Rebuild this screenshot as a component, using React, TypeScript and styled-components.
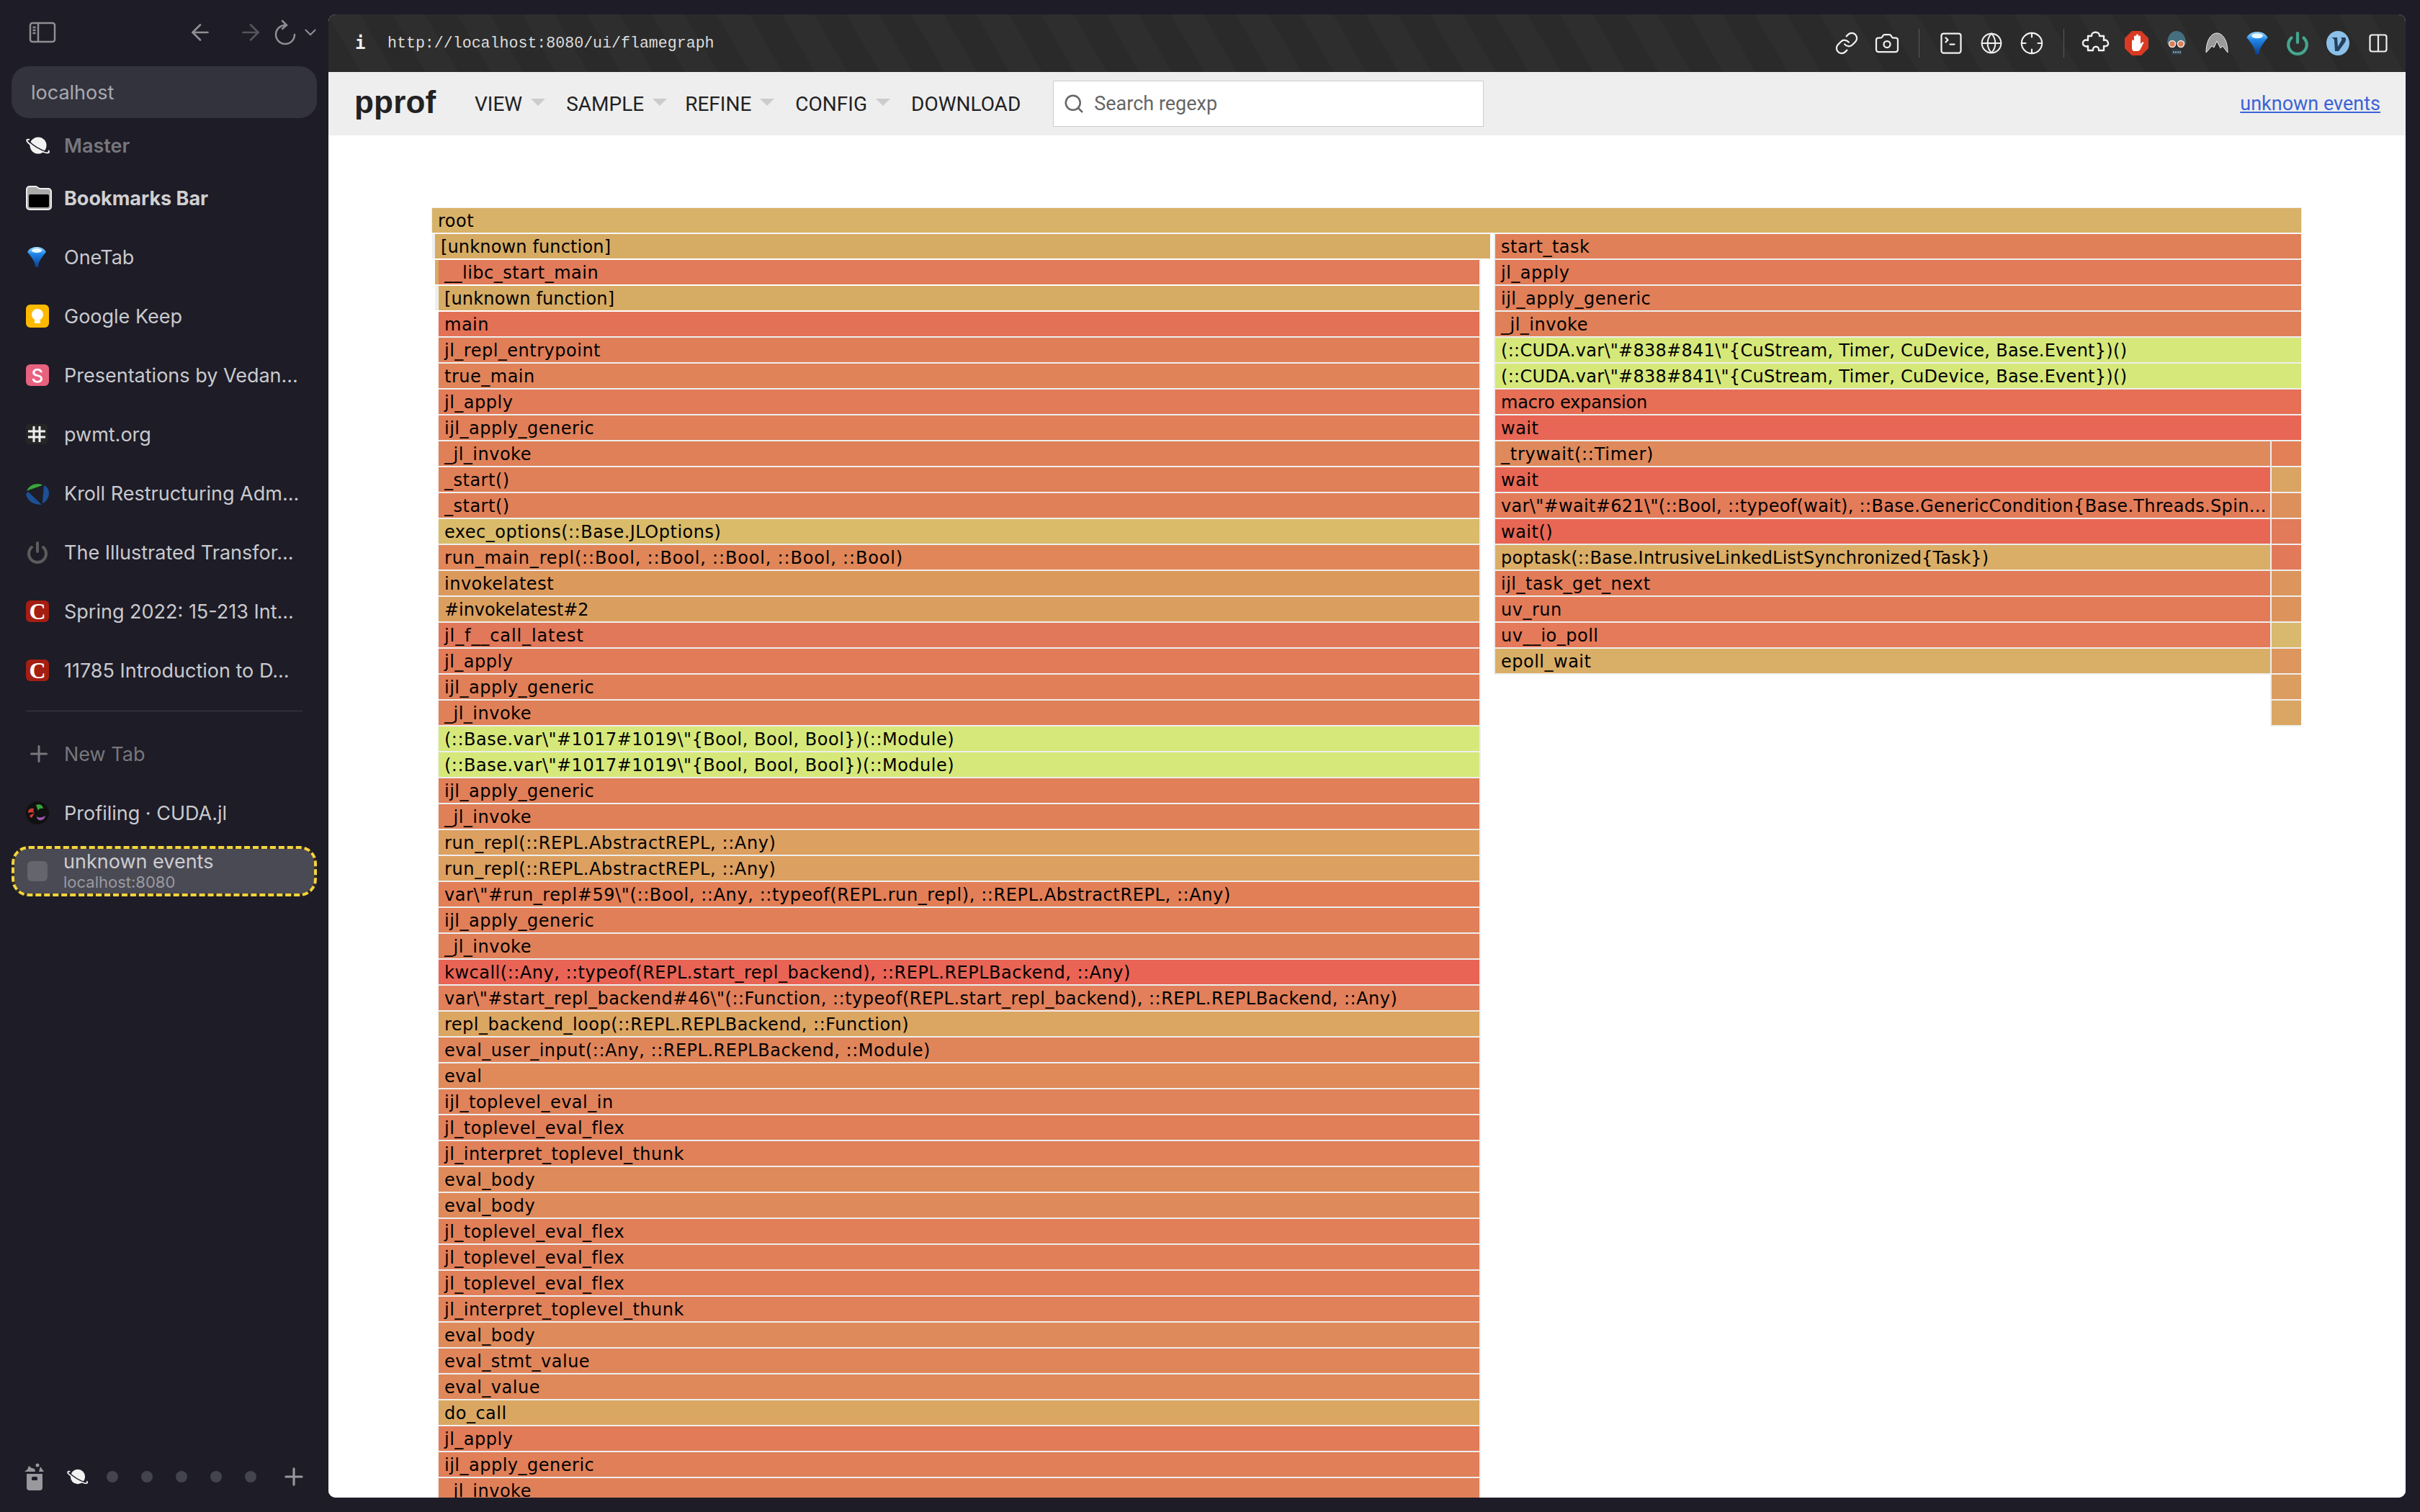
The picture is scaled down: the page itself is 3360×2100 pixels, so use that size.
import React from "react";
import styled, { createGlobalStyle } from "styled-components";
import { ArrowLeft, ArrowRight, Camera, ChevronDown, Crosshair, Globe, Link, Plus, Search, SquareTerminal } from "lucide-react";

const Page = createGlobalStyle`
  html, body {
    margin: 0;
    padding: 0;
    background: #1d1c27;
  }
  * {
    box-sizing: border-box;
  }
`;

const PlanetIcon = ({ size = 34 }: { size?: number }) => (
  <svg width={size} height={size} viewBox="0 0 34 34">
    <circle cx="17" cy="17" r="11.5" fill="#f2f2f2" />
    <path d="M5 9C1 8 0 10 3 13c5 5 17 12 25 14 4 1 5-1 3-3" fill="none" stroke="#f2f2f2" strokeWidth="2" />
    <path d="M4 11c6 6 16 12 25 15" fill="none" stroke="#1d1c27" strokeWidth="1.5" />
  </svg>
);

const FolderIcon = () => (
  <svg width="36" height="34" viewBox="0 0 36 34">
    <path d="M1 5a4 4 0 0 1 4-4h9l5 3h12a4 4 0 0 1 4 4v21a4 4 0 0 1-4 4H5a4 4 0 0 1-4-4z" fill="#aaa" stroke="#eee" strokeWidth="2" />
    <rect x="4" y="12" width="28" height="18" rx="2" fill="#000" />
  </svg>
);

const GemIcon = ({ size = 30 }: { size?: number }) => (
  <svg width={size} height={size} viewBox="0 0 30 30">
    <defs>
      <linearGradient id="gem" x1="0" y1="0" x2="0" y2="1">
        <stop offset="0" stopColor="#9fdcff" />
        <stop offset="0.35" stopColor="#1f86ea" />
        <stop offset="1" stopColor="#0b3d8a" />
      </linearGradient>
    </defs>
    <path d="M2 8c3-5 7-7 13-7s10 2 13 7c-4 5-8 10-10 15l-1 6h-4l-1-6C10 18 6 13 2 8z" fill="url(#gem)" />
    <ellipse cx="15" cy="6" rx="7" ry="3" fill="#e8f7ff" />
  </svg>
);

const KeepIcon = () => (
  <svg width="32" height="32" viewBox="0 0 32 32">
    <rect width="32" height="32" rx="6" fill="#fdb900" />
    <circle cx="16" cy="14" r="8" fill="#fff" />
    <rect x="12" y="22" width="8" height="4" fill="#fff" />
  </svg>
);

const HashIcon = () => (
  <svg width="30" height="28" viewBox="0 0 30 28">
    <rect width="30" height="28" rx="4" fill="#262626" />
    <path d="M11 3v22M19 3v22M3 10h24M3 18h24" stroke="#eee" strokeWidth="3" />
  </svg>
);

const KrollIcon = () => (
  <svg width="32" height="32" viewBox="0 0 32 32">
    <path d="M1 13C4 6 10 3 17 3c3 0 5 1 6 2L3 12z" fill="#3aa53a" />
    <path d="M0 17l3-3 19 18C10 32 2 27 0 17z" fill="#1c5096" />
    <path d="M25 5c5 2 7 7 7 11 0 6-4 12-8 14l-1-1z" fill="#1c5096" />
  </svg>
);

const PowerIcon = ({ size = 32, color = "#5c5c5c" }: { size?: number; color?: string }) => (
  <svg width={size} height={size} viewBox="0 0 32 32" fill="none" stroke={color} strokeWidth="4" strokeLinecap="round">
    <path d="M16 3v12" />
    <path d="M8 9a12 12 0 1 0 16 0" />
  </svg>
);

const JuliaIcon = () => (
  <svg width="32" height="32" viewBox="0 0 32 32">
    <circle cx="16" cy="16" r="16" fill="#111" />
    <path d="M14 5c6-2 9 0 10 5-4-1-6 0-7 3-1-3-2-5-3-8z" fill="#3aa53a" />
    <path d="M3 16c0-5 3-7 8-6-1 3-1 4 1 6-4-1-6-1-9 0zM5 20c2-2 4-3 7-3-2 2-3 4-4 6-2-1-3-2-3-3z" fill="#cb3c33" />
    <path d="M15 21c3 2 7 2 12-1-1 5-5 7-9 6-2-1-3-3-3-5z" fill="#9558b2" />
  </svg>
);

const PanelIcon = () => (
  <svg width="38" height="30" viewBox="0 0 38 30" fill="none" stroke="#8e8e93" strokeWidth="2.5">
    <rect x="2" y="2" width="34" height="26" rx="3" />
    <path d="M13 2v26" />
    <path d="M5.5 8h4M5.5 12h4M5.5 16h4" />
  </svg>
);

const ReloadIcon = () => (
  <svg width="32" height="36" viewBox="0 0 32 36" fill="none" stroke="#8e8e93" strokeWidth="2.5" strokeLinecap="round">
    <path d="M17 8A13 13 0 1 0 29 21" />
    <path d="M12 2l6 6-6 5" />
  </svg>
);

const TrashIcon = () => (
  <svg width="30" height="38" viewBox="0 0 30 38">
    <path d="M4 15h22v19a4 4 0 0 1-4 4H8a4 4 0 0 1-4-4z" fill="#98989d" />
    <rect x="11" y="19" width="8" height="5" rx="1.5" fill="#1d1c27" />
    <path d="M1 12l4-3 2-5 4 3 4 1 1 4zM21 12l2-7 5 7z" fill="#98989d" />
    <circle cx="19" cy="3" r="2.5" fill="#98989d" />
  </svg>
);

const PuzzleIcon = () => (
  <svg width="40" height="34" viewBox="0 0 40 34" fill="none" stroke="#f0f0f0" strokeWidth="2.4" strokeLinejoin="round">
    <path d="M9 7h5c-1-7 12-7 11 0h6v6c6-3 10 10 0 8v6h-7c1-7-9-7-8 0H9v-6C0 24-1 10 9 13z" />
  </svg>
);

const StopIcon = () => (
  <svg width="33" height="34" viewBox="0 0 33 34">
    <path d="M10 0h13l10 10v14L23 34H10L0 24V10z" fill="#d93a22" />
    <path d="M10 14c0-2 3-2 3 0V8c0-2 3-2 3 0V6c0-2 3-2 3 0v2c0-2 3-2 3 0v10l2-2c2-2 3 0 2 1l-4 8c-1 2-2 3-5 3h-3c-3 0-4-2-4-5z" fill="#fff" />
  </svg>
);

const GhostIcon = () => (
  <svg width="30" height="34" viewBox="0 0 30 34">
    <path d="M2 18C2 6 8 0 15 0s13 6 13 18z" fill="#456f7f" />
    <circle cx="9" cy="18" r="4.5" fill="#d97f5c" stroke="#f3e7dc" strokeWidth="1.6" />
    <circle cx="21" cy="18" r="4.5" fill="#d97f5c" stroke="#f3e7dc" strokeWidth="1.6" />
    <path d="M8 25h14v8H8z" fill="#2b3d46" />
    <path d="M11 28v3M14 28v3M17 28v3M20 28v3" stroke="#9fb4bd" strokeWidth="1.4" />
  </svg>
);

const PeakIcon = () => (
  <svg width="32" height="32" viewBox="0 0 32 32">
    <path d="M1 29C1 12 8 2 16 2s15 10 15 27l-7-9-3 3-5-10-4 9-3-2z" fill="#9b9b9b" stroke="#eee" strokeWidth="1" />
  </svg>
);

const VIcon = () => (
  <svg width="32" height="34" viewBox="0 0 32 34">
    <ellipse cx="16" cy="17" rx="16" ry="17" fill="#8bc0e8" />
    <path d="M7 9h8l1 13 5-9c1-2 0-3-1-4h6c2 2 1 5-1 8l-8 11h-5L11 13c0-2-2-3-4-4z" fill="#23405c" />
  </svg>
);

const SplitIcon = () => (
  <svg width="26" height="26" viewBox="0 0 26 26" fill="none" stroke="#f0f0f0" strokeWidth="2.2">
    <rect x="1.5" y="1.5" width="23" height="23" rx="3" />
    <path d="M13 1.5v23" />
  </svg>
);

// label, colour, and letter spacing where the row's width is off with the default
type Row = [string, string, number?];

const stackMain: Row[] = [
  ["main", "#e37155"],
  ["jl_repl_entrypoint", "#e07e58"],
  ["true_main", "#e08358"],
  ["jl_apply", "#e17b58"],
  ["ijl_apply_generic", "#e07f58"],
  ["_jl_invoke", "#e08058"],
  ["_start()", "#e08058"],
  ["_start()", "#e08058"],
  ["exec_options(::Base.JLOptions)", "#d9bb69"],
  ["run_main_repl(::Bool, ::Bool, ::Bool, ::Bool, ::Bool)", "#e08658", 0.82],
  ["invokelatest", "#dc995c"],
  ["#invokelatest#2", "#da9f5e", -0.07],
  ["jl_f__call_latest", "#e1785a", 0.9],
  ["jl_apply", "#e17b58"],
  ["ijl_apply_generic", "#e07f58"],
  ["_jl_invoke", "#e08058"],
  ['(::Base.var\\"#1017#1019\\"{Bool, Bool, Bool})(::Module)', "#d6e87a"],
  ['(::Base.var\\"#1017#1019\\"{Bool, Bool, Bool})(::Module)', "#d6e87a"],
  ["ijl_apply_generic", "#e07f58"],
  ["_jl_invoke", "#e08058"],
  ["run_repl(::REPL.AbstractREPL, ::Any)", "#dca060", 0.62],
  ["run_repl(::REPL.AbstractREPL, ::Any)", "#dca060", 0.62],
  ['var\\"#run_repl#59\\"(::Bool, ::Any, ::typeof(REPL.run_repl), ::REPL.AbstractREPL, ::Any)', "#e27f57", 0.6],
  ["ijl_apply_generic", "#e07f58"],
  ["_jl_invoke", "#e08058"],
  ["kwcall(::Any, ::typeof(REPL.start_repl_backend), ::REPL.REPLBackend, ::Any)", "#e96455"],
  ['var\\"#start_repl_backend#46\\"(::Function, ::typeof(REPL.start_repl_backend), ::REPL.REPLBackend, ::Any)', "#e1805a"],
  ["repl_backend_loop(::REPL.REPLBackend, ::Function)", "#dba662"],
  ["eval_user_input(::Any, ::REPL.REPLBackend, ::Module)", "#e0855a"],
  ["eval", "#e08a5a"],
  ["ijl_toplevel_eval_in", "#e0825a"],
  ["jl_toplevel_eval_flex", "#e07f58"],
  ["jl_interpret_toplevel_thunk", "#e0815a"],
  ["eval_body", "#df8a5a"],
  ["eval_body", "#df8a5a"],
  ["jl_toplevel_eval_flex", "#e07f58"],
  ["jl_toplevel_eval_flex", "#e07f58"],
  ["jl_toplevel_eval_flex", "#e07f58"],
  ["jl_interpret_toplevel_thunk", "#e0815a"],
  ["eval_body", "#df8a5a"],
  ["eval_stmt_value", "#e0855a"],
  ["eval_value", "#df885a"],
  ["do_call", "#daa762"],
  ["jl_apply", "#e17b58"],
  ["ijl_apply_generic", "#e07f58"],
  ["_jl_invoke", "#e08058"],
];

const stackTask: Row[] = [
  ["start_task", "#e08058"],
  ["jl_apply", "#e17b58"],
  ["ijl_apply_generic", "#e07f58"],
  ["_jl_invoke", "#e08058"],
  ['(::CUDA.var\\"#838#841\\"{CuStream, Timer, CuDevice, Base.Event})()', "#d6e87a", 0.28],
  ['(::CUDA.var\\"#838#841\\"{CuStream, Timer, CuDevice, Base.Event})()', "#d6e87a", 0.28],
  ["macro expansion", "#e66f55", -0.17],
  ["wait", "#e86655"],
];

const stackWait: Row[] = [
  ["_trywait(::Timer)", "#de8a5c", 0.75],
  ["wait", "#e86654"],
  ['var\\"#wait#621\\"(::Bool, ::typeof(wait), ::Base.GenericCondition{Base.Threads.Spin...', "#e37c58", 0.33],
  ["wait()", "#e76754"],
  ["poptask(::Base.IntrusiveLinkedListSynchronized{Task})", "#daae66", 0.22],
  ["ijl_task_get_next", "#e27b58"],
  ["uv_run", "#e37b58"],
  ["uv__io_poll", "#e47a59"],
  ["epoll_wait", "#d9ae66"],
];

const stackSide = ["#e28058", "#daa563", "#de905c", "#e17b5a", "#e27a59", "#dc955c", "#dd945c", "#d8b96d", "#dd965d", "#dc9d60", "#daa663"];

const renderRows = (rows: Row[]) =>
  rows.map(([label, color, spacing], i) => (
    <Bar key={i} $bg={color} $spacing={spacing}>{label}</Bar>
  ));

const App = () => {
  const bookmarks: [React.ReactNode, string][] = [
    [<GemIcon />, "OneTab"],
    [<KeepIcon />, "Google Keep"],
    [<Tile $bg="#e8617f">S</Tile>, "Presentations by Vedan..."],
    [<HashIcon />, "pwmt.org"],
    [<KrollIcon />, "Kroll Restructuring Adm..."],
    [<PowerIcon />, "The Illustrated Transfor..."],
    [<Tile $bg="#a51e12" $serif>C</Tile>, "Spring 2022: 15-213 Int..."],
    [<Tile $bg="#a51e12" $serif>C</Tile>, "11785 Introduction to D..."],
  ];

  return (
    <Shell>
      <Page />
      <Sidebar>
        <NavBar>
          <PanelIcon />
          <NavArrows>
            <ArrowLeft size={36} color="#8e8e93" strokeWidth={1.8} />
            <ArrowRight size={36} color="#55555c" strokeWidth={1.8} />
            <ReloadIcon />
            <ChevronDown size={26} color="#8e8e93" strokeWidth={2} />
          </NavArrows>
        </NavBar>
        <Address>localhost</Address>
        <Item $height={64} $tone="#77777c" $weight={600}>
          <ItemIcon><PlanetIcon /></ItemIcon>
          Master
        </Item>
        <Item $tone="#d0d0d3" $weight={700}>
          <ItemIcon><FolderIcon /></ItemIcon>
          Bookmarks Bar
        </Item>
        {bookmarks.map(([icon, label]) => (
          <Item key={label}>
            <ItemIcon>{icon}</ItemIcon>
            {label}
          </Item>
        ))}
        <Divider />
        <Item $tone="#77777c">
          <ItemIcon><Plus size={36} color="#77777c" strokeWidth={2} /></ItemIcon>
          New Tab
        </Item>
        <Item>
          <ItemIcon><JuliaIcon /></ItemIcon>
          Profiling · CUDA.jl
        </Item>
        <ActiveTab>
          <ActiveFavicon />
          <ActiveText>
            <ActiveTitle>unknown events</ActiveTitle>
            <ActiveHost>localhost:8080</ActiveHost>
          </ActiveText>
        </ActiveTab>
        <Footer>
          <TrashIcon />
          <PlanetIcon size={30} />
          <Dot />
          <Dot />
          <Dot />
          <Dot />
          <Dot />
          <Plus size={38} color="#98989d" strokeWidth={2} />
        </Footer>
      </Sidebar>
      <Browser>
        <Toolbar>
          <InfoMark>i</InfoMark>
          <Url>http://localhost:8080/ui/flamegraph</Url>
          <ToolIcons>
            <ToolSlot><Link size={34} color="#f0f0f0" strokeWidth={1.6} /></ToolSlot>
            <ToolSlot><Camera size={36} color="#f0f0f0" strokeWidth={1.5} /></ToolSlot>
            <ToolDivider />
            <ToolSlot><SquareTerminal size={36} color="#f0f0f0" strokeWidth={1.5} /></ToolSlot>
            <ToolSlot><Globe size={32} color="#f0f0f0" strokeWidth={1.5} /></ToolSlot>
            <ToolSlot><Crosshair size={34} color="#f0f0f0" strokeWidth={1.5} /></ToolSlot>
            <ToolDivider />
            <ToolSlot><PuzzleIcon /></ToolSlot>
            <ToolSlot><StopIcon /></ToolSlot>
            <ToolSlot><GhostIcon /></ToolSlot>
            <ToolSlot><PeakIcon /></ToolSlot>
            <ToolSlot><GemIcon size={34} /></ToolSlot>
            <ToolSlot><PowerIcon size={34} color="#45a58f" /></ToolSlot>
            <ToolSlot><VIcon /></ToolSlot>
            <ToolSlot><SplitIcon /></ToolSlot>
          </ToolIcons>
        </Toolbar>
        <Header>
          <Logo>pprof</Logo>
          <Menu $left={49}>VIEW<Caret /></Menu>
          <Menu $left={0}>SAMPLE<Caret /></Menu>
          <Menu $left={-4}>REFINE<Caret /></Menu>
          <Menu $left={0}>CONFIG<Caret /></Menu>
          <Menu $left={0}>DOWNLOAD</Menu>
          <SearchBox>
            <Search size={30} color="#666" strokeWidth={2} />
            Search regexp
          </SearchBox>
          <Title>unknown events</Title>
        </Header>
        <Content>
          <Graph>
            <Bar $bg="#d8b268" $outlined>root</Bar>
            <Split>
              <LeftGroup>
                <Line>
                  <Sliver $width={4} $bg="#eeeeee" />
                  <LineBar $bg="#d6ab64" $spacing={0.15}>[unknown function]</LineBar>
                </Line>
                <Nested>
                  <Line>
                    <Sliver $width={5} $bg="#d6ab64" />
                    <LineBar $bg="#e27b59">__libc_start_main</LineBar>
                  </Line>
                  <Line>
                    <Sliver $width={5} $bg="#eeeeee" />
                    <LineBar $bg="#d6ab64" $spacing={0.15}>[unknown function]</LineBar>
                  </Line>
                  <MainStack>{renderRows(stackMain)}</MainStack>
                </Nested>
              </LeftGroup>
              <RightGroup>
                <TaskStack>{renderRows(stackTask)}</TaskStack>
                <WaitSplit>
                  <WaitStack>{renderRows(stackWait)}</WaitStack>
                  <SideStack>
                    {stackSide.map((color, i) => (
                      <Bar key={i} $bg={color} />
                    ))}
                  </SideStack>
                </WaitSplit>
              </RightGroup>
            </Split>
          </Graph>
        </Content>
      </Browser>
    </Shell>
  );
};

const Shell = styled.div`
  display: flex;
  width: 3360px;
  height: 2100px;
  overflow: hidden;
  background: #1d1c27;
`;

const Sidebar = styled.div`
  position: relative;
  width: 456px;
  flex: none;
  display: flex;
  flex-direction: column;
  padding: 0 16px;
  font-family: Inter, "Noto Sans", sans-serif;
`;

const NavBar = styled.div`
  height: 86px;
  padding: 4px 0 0 24px;
  flex: none;
  display: flex;
  align-items: center;
  justify-content: space-between;
`;

const NavArrows = styled.div`
  display: flex;
  align-items: center;
  gap: 16px;
  margin-right: -4px;

  & > svg:nth-child(1) {
    margin-right: 18px;
  }
  & > svg:nth-child(3) {
    margin-left: -2px;
  }
  & > svg:nth-child(4) {
    margin-left: -10px;
  }
`;

const Address = styled.div`
  height: 72px;
  flex: none;
  margin: 6px 0;
  padding-left: 27px;
  display: flex;
  align-items: center;
  border-radius: 24px;
  background: #33333e;
  color: #a9a9ae;
  font-size: 27px;
`;

const Item = styled.div<{ $height?: number; $tone?: string; $weight?: number }>`
  height: ${({ $height }) => $height || 82}px;
  flex: none;
  display: flex;
  align-items: center;
  color: ${({ $tone }) => $tone || "#c9c9cd"};
  font-size: 27px;
  font-weight: ${({ $weight }) => $weight || 400};
  white-space: nowrap;
`;

const ItemIcon = styled.span`
  width: 73px;
  padding-left: 20px;
  flex: none;
  display: flex;
  align-items: center;
`;

const Tile = styled.span<{ $bg: string; $serif?: boolean }>`
  width: 32px;
  height: 30px;
  display: flex;
  align-items: center;
  justify-content: center;
  border-radius: 6px;
  background: ${({ $bg }) => $bg};
  color: #fff;
  font-family: ${({ $serif }) => ($serif ? '"Liberation Serif", serif' : "Inter, sans-serif")};
  font-size: ${({ $serif }) => ($serif ? 32 : 26)}px;
  font-weight: ${({ $serif }) => ($serif ? 700 : 500)};
`;

const Divider = styled.div`
  height: 1px;
  margin: 15px 20px 18px;
  flex: none;
  background: #3c3c46;
`;

const ActiveTab = styled.div`
  height: 70px;
  margin-top: 5px;
  flex: none;
  display: flex;
  align-items: center;
  border: 4px dashed #f5d33f;
  border-radius: 24px;
  background: linear-gradient(#4a4a54, #4a4a54) padding-box, linear-gradient(#332f1e, #332f1e) border-box;
`;

const ActiveFavicon = styled.span`
  width: 28px;
  height: 28px;
  margin-left: 18px;
  flex: none;
  border-radius: 6px;
  background: #65656d;
`;

const ActiveText = styled.div`
  margin-left: 22px;
  display: flex;
  flex-direction: column;
  overflow: hidden;
`;

const ActiveTitle = styled.span`
  color: #cdcdd1;
  font-size: 27px;
  line-height: 31px;
`;

const ActiveHost = styled.span`
  color: #9a9aa0;
  font-size: 22px;
  line-height: 27px;
`;

const Footer = styled.div`
  position: absolute;
  left: 33px;
  bottom: 30px;
  display: flex;
  align-items: center;
  gap: 32px;

  & > svg:nth-child(2) {
    margin-left: -2px;
    margin-right: -7px;
  }
  & > svg:last-child {
    margin-left: 1px;
  }
`;

const Dot = styled.span`
  width: 16px;
  height: 16px;
  border-radius: 50%;
  background: #44444e;
`;

const Browser = styled.div`
  width: 2884px;
  height: 2060px;
  margin-top: 20px;
  flex: none;
  display: flex;
  flex-direction: column;
  overflow: hidden;
  border-radius: 10px;
  background: #fff;
`;

const Toolbar = styled.div`
  height: 80px;
  flex: none;
  padding: 0 10px 0 37px;
  display: flex;
  align-items: center;
  background: repeating-linear-gradient(60deg, #2a2a2a 0 39px, #2e2e2e 39px 78px);
`;

const InfoMark = styled.span`
  width: 45px;
  color: #f0f0f0;
  font-family: "DejaVu Sans Mono", monospace;
  font-size: 24px;
  font-weight: 700;
`;

const Url = styled.span`
  color: #dcdcdc;
  font-family: "Liberation Mono", monospace;
  font-size: 21.6px;
`;

const ToolIcons = styled.div`
  margin-left: auto;
  display: flex;
  align-items: center;
`;

const ToolSlot = styled.span`
  width: 56px;
  display: flex;
  align-items: center;
  justify-content: center;
`;

const ToolDivider = styled.span`
  width: 1px;
  height: 40px;
  margin: 0 16px;
  background: #5a5a5a;
`;

const Header = styled.div`
  height: 88px;
  flex: none;
  padding: 0 35px 0 36px;
  display: flex;
  align-items: center;
  background: #eeeeee;
  font-family: Roboto, sans-serif;
  font-size: 28px;
  color: #222;
`;

const Logo = styled.span`
  width: 118px;
  color: #222;
  font-family: "Liberation Sans", sans-serif;
  font-size: 44px;
  font-weight: 700;
  letter-spacing: 0.2px;
  margin-top: -4px;
`;

const Menu = styled.span<{ $left: number }>`
  margin-left: ${({ $left }) => $left}px;
  margin-right: 29px;
  display: flex;
  align-items: center;
  gap: 12px;
`;

const Caret = styled.span`
  width: 0;
  height: 0;
  border-left: 10px solid transparent;
  border-right: 10px solid transparent;
  border-top: 10px solid #cccccc;
  margin-top: -4px;
`;

const SearchBox = styled.div`
  width: 598px;
  height: 64px;
  margin-left: 16px;
  padding-left: 13px;
  display: flex;
  align-items: center;
  gap: 13px;
  border: 1px solid #cccccc;
  background: #fff;
  color: #666;
  font-size: 27px;
`;

const Title = styled.span`
  margin-left: auto;
  color: #3b64d8;
  font-size: 27px;
  text-decoration: underline;
`;

const Content = styled.div`
  flex: 1;
  min-height: 0;
  padding: 101px 0 0 144px;
  overflow: hidden;
  background: #fff;
`;

const Graph = styled.div`
  width: 2595px;
  display: flex;
  flex-direction: column;
  gap: 2px;
  background: #fff;
  font-family: "DejaVu Sans", Verdana, sans-serif;
  font-size: 24px;
  color: #000;
`;

const Bar = styled.div<{ $bg: string; $spacing?: number; $outlined?: boolean }>`
  height: 34px;
  flex: none;
  padding-left: 8px;
  line-height: 36px;
  letter-spacing: ${({ $spacing }) => $spacing ?? 0.5}px;
  overflow: hidden;
  white-space: nowrap;
  background: ${({ $bg }) => $bg};
  box-shadow: ${({ $outlined }) => ($outlined ? "0 0 0 1px #eeeeee" : "none")};
`;

const LineBar = styled(Bar)`
  flex: 1;
  min-width: 0;
`;

const Split = styled.div`
  display: flex;
  align-items: flex-start;
`;

const LeftGroup = styled.div`
  width: 1469px;
  flex: none;
  display: flex;
  flex-direction: column;
  gap: 2px;
`;

const Line = styled.div`
  display: flex;
  background: #eeeeee;
`;

const Sliver = styled.span<{ $width: number; $bg: string }>`
  width: ${({ $width }) => $width}px;
  flex: none;
  background: ${({ $bg }) => $bg};
`;

const Nested = styled.div`
  width: 1452px;
  margin-left: 4px;
  padding-right: 2px;
  display: flex;
  flex-direction: column;
  gap: 2px;
  background: linear-gradient(to left, #eeeeee 2px, transparent 2px);
`;

const MainStack = styled.div`
  margin-left: 4px;
  padding-left: 1px;
  display: flex;
  flex-direction: column;
  gap: 2px;
  background: #eeeeee;
`;

const RightGroup = styled.div`
  width: 1121px;
  margin-left: 5px;
  flex: none;
  display: flex;
  flex-direction: column;
`;

const TaskStack = styled.div`
  padding: 0 0 2px 2px;
  display: flex;
  flex-direction: column;
  gap: 2px;
  background: #eeeeee;
`;

const WaitSplit = styled.div`
  display: flex;
  align-items: flex-start;
`;

const WaitStack = styled.div`
  width: 1078px;
  flex: none;
  padding: 0 0 2px 2px;
  display: flex;
  flex-direction: column;
  gap: 2px;
  background: #eeeeee;
`;

const SideStack = styled.div`
  flex: 1;
  padding: 0 0 2px 2px;
  display: flex;
  flex-direction: column;
  gap: 2px;
  background: #eeeeee;
`;

export default App;
